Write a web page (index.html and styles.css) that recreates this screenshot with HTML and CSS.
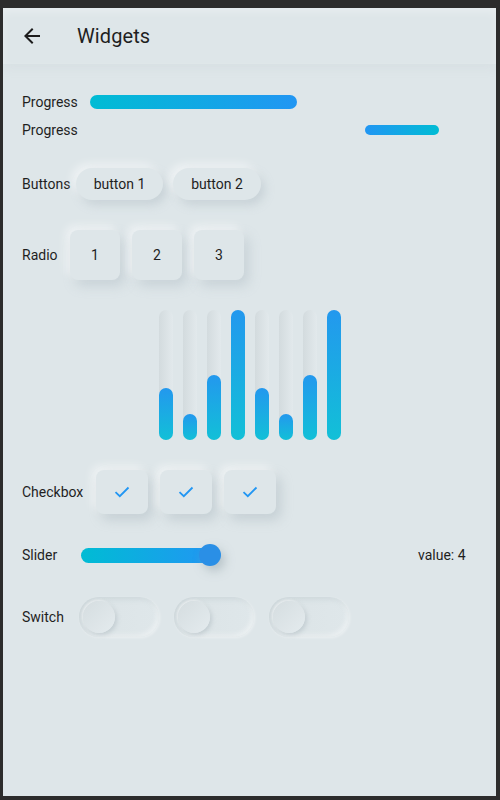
FILE: index.html
```html
<!DOCTYPE html>
<html>
<head>
<meta charset="utf-8">
<link rel="stylesheet" href="styles.css">
</head>
<body>
<div class="frame">
  <div class="screen">
    <header class="appbar">
      <span class="back">
        <svg width="24" height="24" viewBox="0 0 24 24"><path d="M20 11H7.83l5.59-5.59L12 4l-8 8 8 8 1.41-1.41L7.83 13H20v-2z" fill="#1d1d1d"/></svg>
      </span>
      <h1 class="title">Widgets</h1>
    </header>

    <div class="row row-p1">
      <span class="label w-prog">Progress</span>
      <div class="bar bar-a"></div>
    </div>
    <div class="row row-p2">
      <span class="label w-prog2">Progress</span>
      <div class="bar bar-b"></div>
    </div>

    <div class="row row-btn">
      <span class="label w-btn">Buttons</span>
      <div class="group">
        <div class="btn btn-1">button 1</div>
        <div class="btn btn-2">button 2</div>
      </div>
    </div>

    <div class="row row-radio">
      <span class="label w-radio">Radio</span>
      <div class="group">
        <div class="radio">1</div>
        <div class="radio">2</div>
        <div class="radio">3</div>
      </div>
    </div>

    <div class="chart">
      <div class="col"><div class="fill" style="height:40%"></div></div>
      <div class="col"><div class="fill" style="height:20%"></div></div>
      <div class="col"><div class="fill" style="height:50%"></div></div>
      <div class="col"><div class="fill" style="height:100%"></div></div>
      <div class="col"><div class="fill" style="height:40%"></div></div>
      <div class="col"><div class="fill" style="height:20%"></div></div>
      <div class="col"><div class="fill" style="height:50%"></div></div>
      <div class="col"><div class="fill" style="height:100%"></div></div>
    </div>

    <div class="row row-check">
      <span class="label w-check">Checkbox</span>
      <div class="group">
        <div class="check"><svg width="16" height="12" viewBox="0 0 16 12"><path d="M1.5 6.2 5.8 10.2 14.5 1.5" fill="none" stroke="#2196f3" stroke-width="1.8"/></svg></div>
        <div class="check"><svg width="16" height="12" viewBox="0 0 16 12"><path d="M1.5 6.2 5.8 10.2 14.5 1.5" fill="none" stroke="#2196f3" stroke-width="1.8"/></svg></div>
        <div class="check"><svg width="16" height="12" viewBox="0 0 16 12"><path d="M1.5 6.2 5.8 10.2 14.5 1.5" fill="none" stroke="#2196f3" stroke-width="1.8"/></svg></div>
      </div>
    </div>

    <div class="row row-slider">
      <span class="label w-slider">Slider</span>
      <div class="slider">
        <div class="slider-track"></div>
        <div class="thumb"></div>
      </div>
      <span class="value">value: 4</span>
    </div>

    <div class="row row-switch">
      <span class="label w-switch">Switch</span>
      <div class="group sw-group">
        <div class="switch"><div class="knob"></div></div>
        <div class="switch"><div class="knob"></div></div>
        <div class="switch"><div class="knob"></div></div>
      </div>
    </div>
  </div>
</div>
</body>
</html>
```

FILE: styles.css
```css
* { box-sizing: border-box; }
html, body { margin: 0; padding: 0; }
body {
  background: #2c2c2c;
  font-family: Roboto, "Liberation Sans", sans-serif;
  color: #1f1f1f;
}
.frame {
  width: 500px;
  height: 800px;
  padding: 8px 4px 4px 3px;
}
.screen {
  width: 493px;
  height: 788px;
  background: #dee6e9;
  overflow: hidden;
}
.appbar {
  height: 56px;
  display: flex;
  align-items: center;
  padding-left: 17px;
  background: #dee6e9;
  box-shadow: 0 4px 10px rgba(170, 185, 192, 0.12), inset 0 4px 8px rgba(255,255,255,0.3);
}
.back { width: 24px; height: 24px; display: flex; }
.title {
  margin: 0 0 0 33px;
  font-size: 20px;
  font-weight: 400;
  color: #1f1f1f;
  letter-spacing: 0.1px;
}
.row {
  display: flex;
  align-items: center;
  padding-left: 19px;
}
.label { font-size: 14px; flex: none; }
.w-prog { width: 68px; }
.w-prog2 { width: 343px; }
.w-btn { width: 54px; }
.w-radio { width: 48px; }
.w-check { width: 74px; }
.w-slider { width: 59px; }
.w-switch { width: 57px; }
.group { display: flex; gap: 12px; }

.row-p1 { height: 20px; margin-top: 28px; }
.row-p2 { height: 20px; margin-top: 8px; }
.bar { border-radius: 7px; }
.bar-a {
  width: 207px; height: 14px;
  background: linear-gradient(to right, #00bcd4, #2196f3);
}
.bar-b {
  width: 74px; height: 10px; border-radius: 5px;
  background: linear-gradient(to right, #2196f3, #00bcd4);
}

.row-btn { height: 32px; margin-top: 28px; }
.row-btn .group { gap: 10px; }
.btn {
  height: 32px;
  border-radius: 16px;
  display: flex; align-items: center; justify-content: center;
  font-size: 14px;
  background: #dee6e9;
  box-shadow: 4px 5px 10px rgba(160, 175, 182, 0.35), -4px -4px 10px rgba(255,255,255,0.55);
}
.btn-1 { width: 87px; }
.btn-2 { width: 88px; }

.row-radio { height: 50px; margin-top: 30px; }
.radio {
  width: 50px; height: 50px;
  border-radius: 8px;
  display: flex; align-items: center; justify-content: center;
  font-size: 14px;
  background: #dee6e9;
  box-shadow: 5px 6px 12px rgba(160, 175, 182, 0.35), -4px -4px 10px rgba(255,255,255,0.55);
}

.chart {
  margin-top: 30px;
  height: 130px;
  display: flex;
  justify-content: center;
  gap: 10px;
  margin-left: 1px;
}
.col {
  width: 14px; height: 130px;
  border-radius: 7px;
  background: linear-gradient(to right, #d3dbde, #e2e9ec);
  display: flex; align-items: flex-end;
}
.fill {
  width: 14px;
  border-radius: 7px;
  background: linear-gradient(to top, #12c0d7, #2398ee);
}

.row-check { height: 44px; margin-top: 30px; }
.check {
  width: 52px; height: 44px;
  border-radius: 8px;
  display: flex; align-items: center; justify-content: center;
  background: #dee6e9;
  box-shadow: 5px 6px 12px rgba(160, 175, 182, 0.4), -4px -4px 10px rgba(255,255,255,0.55);
}

.row-slider { height: 22px; margin-top: 30px; }
.slider {
  width: 140px; height: 22px;
  display: flex; align-items: center;
  position: relative;
}
.slider-track {
  width: 134px; height: 15px;
  border-radius: 8px;
  background: linear-gradient(to right, #00bcd4, #2196f3);
}
.thumb {
  position: absolute;
  right: 0; top: 0;
  width: 22px; height: 22px;
  border-radius: 50%;
  background: #2a8fe6;
  box-shadow: 4px 5px 10px rgba(150, 165, 172, 0.5);
}
.value { margin-left: 197px; font-size: 14px; }

.row-switch { height: 40px; margin-top: 31px; }
.sw-group { gap: 15px; }
.switch {
  width: 80px; height: 40px;
  border-radius: 20px;
  padding: 4px;
  display: flex; align-items: center;
  background: linear-gradient(to right, #dbe3e6, #dfe7ea);
  box-shadow: inset 2px 2px 5px rgba(170, 182, 188, 0.35), inset -2px -2px 5px rgba(255,255,255,0.5), 1px 1px 3px rgba(255,255,255,0.4);
}
.knob {
  width: 32px; height: 32px;
  border-radius: 50%;
  background: linear-gradient(135deg, #d5dde0, #e4ebee);
  box-shadow: 2px 2px 4px rgba(165, 178, 185, 0.45), -1px -1px 3px rgba(255,255,255,0.6);
}
```
